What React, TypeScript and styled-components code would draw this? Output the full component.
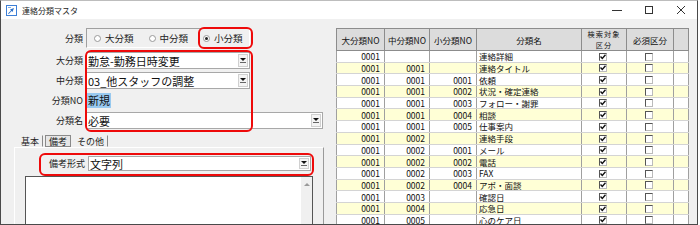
import styled, { createGlobalStyle } from "styled-components";

const GlobalStyle = createGlobalStyle`
  html, body { margin: 0; padding: 0; background: #fff; }
  body { font-family: "Noto Sans CJK JP", "Noto Sans", sans-serif; color: #111; }
  * { box-sizing: border-box; }
`;

type Row = { dai: string; chu: string; sho: string; name: string };

const rows: Row[] = [
  { dai: "0001", chu: "", sho: "", name: "連絡詳細" },
  { dai: "0001", chu: "0001", sho: "", name: "連絡タイトル" },
  { dai: "0001", chu: "0001", sho: "0001", name: "依頼" },
  { dai: "0001", chu: "0001", sho: "0002", name: "状況・確定連絡" },
  { dai: "0001", chu: "0001", sho: "0003", name: "フォロー・謝罪" },
  { dai: "0001", chu: "0001", sho: "0004", name: "相談" },
  { dai: "0001", chu: "0001", sho: "0005", name: "仕事案内" },
  { dai: "0001", chu: "0002", sho: "", name: "連絡手段" },
  { dai: "0001", chu: "0002", sho: "0001", name: "メール" },
  { dai: "0001", chu: "0002", sho: "0002", name: "電話" },
  { dai: "0001", chu: "0002", sho: "0003", name: "FAX" },
  { dai: "0001", chu: "0002", sho: "0004", name: "アポ・面談" },
  { dai: "0001", chu: "0003", sho: "", name: "確認日" },
  { dai: "0001", chu: "0004", sho: "", name: "応急日" },
  { dai: "0001", chu: "0005", sho: "", name: "心のケア日" },
];

const colWidths = [48, 45, 47, 105, 45, 47, 15];

const Window = styled.div`
  width: 698px;
  height: 225px;
  border: 1px solid #4a4a4a;
  border-top-color: #bdbdbd;
  display: flex;
  flex-direction: column;
  overflow: hidden;
`;

const TitleBar = styled.div`
  height: 18px;
  background: #fff;
  display: flex;
  align-items: center;
  padding-left: 5px;
  flex-shrink: 0;
`;

const Title = styled.span`
  font-size: 8px;
  margin-left: 5px;
  color: #222;
`;

const Controls = styled.div`
  margin-left: auto;
  display: flex;
  height: 100%;
  align-items: center;
`;

const Ctrl = styled.div`
  width: 32px;
  height: 100%;
  display: flex;
  align-items: center;
  justify-content: center;
`;

const Body = styled.div`
  flex: 1;
  display: flex;
  background: #f0f0f0;
  min-height: 0;
`;

const LeftPane = styled.div`
  width: 323px;
  position: relative;
  display: flex;
  flex-direction: column;
  padding-top: 9px;
`;

const FormRow = styled.div<{ $h?: number; $mt?: number }>`
  display: flex;
  align-items: center;
  height: ${({ $h }) => $h ?? 17}px;
  margin-top: ${({ $mt }) => $mt ?? 0}px;
`;

const Label = styled.div<{ $w?: number }>`
  width: ${({ $w }) => $w ?? 85}px;
  text-align: right;
  padding-right: 3px;
  font-size: 9px;
  color: #222;
  white-space: nowrap;
`;

const RadioGroup = styled.div`
  width: 164px;
  height: 20px;
  border: 1px solid;
  border-color: #a0a0a0 #fff #fff #a0a0a0;
  display: flex;
  align-items: center;
  padding-left: 7px;
  gap: 15px;
`;

const RadioItem = styled.label`
  display: flex;
  align-items: center;
  gap: 4px;
  font-size: 9.5px;
  color: #222;
`;

const RadioDot = styled.span<{ $on?: boolean }>`
  width: 7px;
  height: 7px;
  border-radius: 50%;
  border: 1px solid #9a9a9a;
  background: #fff;
  display: inline-flex;
  align-items: center;
  justify-content: center;
  &::after {
    content: "";
    width: 3px;
    height: 3px;
    border-radius: 50%;
    background: ${({ $on }) => ($on ? "#222" : "transparent")};
  }
`;

const Select = styled.div<{ $w: number; $h?: number }>`
  width: ${({ $w }) => $w}px;
  height: ${({ $h }) => $h ?? 17}px;
  background: #fff;
  border: 1px solid #a8a8a8;
  display: flex;
  align-items: center;
  font-size: 11px;
  padding-left: 1px;
  color: #111;
  white-space: nowrap;
`;

const SelectText = styled.span`
  flex: 1;
  overflow: hidden;
`;

const DropBtn = styled.span`
  width: 10px;
  height: calc(100% - 2px);
  margin-right: 1px;
  background: #f4f4f4;
  border: 1px solid #d0d0d0;
  display: flex;
  flex-direction: column;
  align-items: center;
  justify-content: center;
  gap: 1px;
  &::before {
    content: "";
    border-left: 3px solid transparent;
    border-right: 3px solid transparent;
    border-top: 3px solid #111;
  }
  &::after {
    content: "";
    width: 6px;
    height: 1px;
    background: #666;
  }
`;

const Selected = styled.span`
  background: #99c9ef;
  font-size: 11px;
  padding: 0 1px;
  line-height: 15px;
  margin-left: 1px;
`;

const Tabs = styled.div`
  display: flex;
  align-items: center;
  height: 12px;
  margin-top: 6px;
  padding-left: 16px;
  font-size: 9px;
  color: #222;
`;

const Tab = styled.span<{ $active?: boolean }>`
  padding: 0 3px;
  height: 12px;
  line-height: 11px;
  border: 1px solid ${({ $active }) => ($active ? "#8a8a8a" : "transparent")};
  border-right-color: #8a8a8a;
  background: ${({ $active }) => ($active ? "#e6e6e6" : "transparent")};
  margin-right: 2px;
`;

const Panel = styled.div`
  margin-left: 13px;
  width: 310px;
  flex: 1;
  border-left: 1px solid #fff;
  border-top: 1px solid #fff;
  border-right: 1px solid #9a9a9a;
  display: flex;
  flex-direction: column;
  padding-top: 8px;
`;

const TextArea = styled.div`
  margin: 5px 0 0 10px;
  width: 288px;
  flex: 1;
  background: #fff;
  border: 1px solid #555;
  border-bottom: none;
  display: flex;
  justify-content: flex-end;
`;

const ScrollBar = styled.div`
  width: 11px;
  background: #f0f0f0;
  display: flex;
  justify-content: center;
  padding-top: 6px;
  &::before {
    content: "";
    border-left: 3px solid transparent;
    border-right: 3px solid transparent;
    border-bottom: 3px solid #9a9a9a;
    height: 0;
  }
`;

const Highlight = styled.div<{ $x: number; $y: number; $w: number; $h: number }>`
  position: absolute;
  left: ${({ $x }) => $x}px;
  top: ${({ $y }) => $y}px;
  width: ${({ $w }) => $w}px;
  height: ${({ $h }) => $h}px;
  border: 2.5px solid #ee0a0a;
  border-radius: 6px;
  pointer-events: none;
`;

const Splitter = styled.div`
  width: 12px;
`;

const RightPane = styled.div`
  width: 352px;
  padding-top: 9px;
`;

const Grid = styled.table`
  border-collapse: collapse;
  table-layout: fixed;
  width: 352px;
  font-size: 8.5px;
  color: #111;
`;

const Th = styled.th`
  background: #dcdcdc;
  border: 1px solid #8c8c8c;
  font-weight: normal;
  height: 21px;
  padding: 0;
  line-height: 10px;
  font-size: 8.5px;
  white-space: nowrap;
`;

const TwoLine = styled.span`
  display: block;
  font-size: 7.2px;
  line-height: 10.5px;
  letter-spacing: 1px;
`;

const Tr = styled.tr<{ $alt: boolean }>`
  background: ${({ $alt }) => ($alt ? "#ffffd6" : "#fff")};
`;

const Td = styled.td<{ $align?: string }>`
  height: 11.4px;
  padding: 0 4px 0 2px;
  line-height: 10px;
  border-left: 1px solid #a0a0a0;
  border-right: 1px solid #a0a0a0;
  border-bottom: 1px solid #d4d4d4;
  text-align: ${({ $align }) => $align ?? "left"};
  white-space: nowrap;
  overflow: hidden;
`;

const Check = styled.span`
  display: inline-block;
  width: 8px;
  height: 8px;
  border: 1px solid;
  border-color: #555 #bbb #bbb #555;
  background: #fff;
  vertical-align: middle;
  position: relative;
  top: -1px;
`;

const CheckBox = ({ on }: { on: boolean }) => (
  <Check>
    {on && (
      <svg width="6" height="6" viewBox="0 0 6 6" style={{ display: "block" }}>
        <polyline points="0.5,2.5 2.3,4.5 5.5,0.8" fill="none" stroke="#111" strokeWidth="1.4" />
      </svg>
    )}
  </Check>
);

const AppIcon = () => (
  <svg width="11" height="11" viewBox="0 0 11 11">
    <rect x="0.5" y="0.5" width="10" height="10" fill="#fff" stroke="#3d7fd6" />
    <path d="M2 8.5 L5 5.5 L4 4.5 L8 3 L6.5 7 L5.6 6.1 L2.8 9 Z" fill="#2a6fc9" />
    <rect x="2" y="2" width="3" height="1" fill="#7fb0e8" />
  </svg>
);

export default function App() {
  return (
    <>
      <GlobalStyle />
      <Window>
        <TitleBar>
          <AppIcon />
          <Title>連絡分類マスタ</Title>
          <Controls>
            <Ctrl>
              <svg width="10" height="10" viewBox="0 0 10 10">
                <line x1="0" y1="5.5" x2="10" y2="5.5" stroke="#333" strokeWidth="1" />
              </svg>
            </Ctrl>
            <Ctrl>
              <svg width="10" height="10" viewBox="0 0 10 10">
                <rect x="1.5" y="1.5" width="7" height="7" fill="none" stroke="#333" strokeWidth="1" />
              </svg>
            </Ctrl>
            <Ctrl>
              <svg width="10" height="10" viewBox="0 0 10 10">
                <path d="M1 1 L9 9 M9 1 L1 9" stroke="#333" strokeWidth="1" />
              </svg>
            </Ctrl>
          </Controls>
        </TitleBar>
        <Body>
          <LeftPane>
            <FormRow $h={20}>
              <Label>分類</Label>
              <RadioGroup>
                <RadioItem>
                  <RadioDot />
                  大分類
                </RadioItem>
                <RadioItem>
                  <RadioDot />
                  中分類
                </RadioItem>
                <RadioItem>
                  <RadioDot $on />
                  小分類
                </RadioItem>
              </RadioGroup>
            </FormRow>
            <FormRow $mt={4}>
              <Label>大分類</Label>
              <Select $w={164}>
                <SelectText>勤怠-勤務日時変更</SelectText>
                <DropBtn />
              </Select>
            </FormRow>
            <FormRow $mt={3}>
              <Label>中分類</Label>
              <Select $w={164}>
                <SelectText>03_他スタッフの調整</SelectText>
                <DropBtn />
              </Select>
            </FormRow>
            <FormRow $mt={3}>
              <Label>分類NO</Label>
              <Selected>新規</Selected>
            </FormRow>
            <FormRow $mt={3}>
              <Label>分類名</Label>
              <Select $w={237}>
                <SelectText>必要</SelectText>
                <DropBtn />
              </Select>
            </FormRow>
            <Tabs>
              <Tab>基本</Tab>
              <Tab $active>備考</Tab>
              <Tab>その他</Tab>
            </Tabs>
            <Panel>
              <FormRow $h={15}>
                <Label $w={73}>備考形式</Label>
                <Select $w={223} $h={15}>
                  <SelectText>文字列</SelectText>
                  <DropBtn />
                </Select>
              </FormRow>
              <TextArea>
                <ScrollBar />
              </TextArea>
            </Panel>
            <Highlight $x={197} $y={8} $w={55} $h={22} />
            <Highlight $x={84} $y={31} $w={168} $h={82} />
            <Highlight $x={38} $y={134} $w={275} $h={23} />
          </LeftPane>
          <Splitter />
          <RightPane>
            <Grid>
              <colgroup>
                {colWidths.map((w, i) => (
                  <col key={i} style={{ width: w }} />
                ))}
              </colgroup>
              <thead>
                <tr>
                  <Th>大分類NO</Th>
                  <Th>中分類NO</Th>
                  <Th>小分類NO</Th>
                  <Th>分類名</Th>
                  <Th>
                    <TwoLine>
                      検索対象
                      <br />
                      区分
                    </TwoLine>
                  </Th>
                  <Th>必須区分</Th>
                  <Th />
                </tr>
              </thead>
              <tbody>
                {rows.map((r, i) => (
                  <Tr key={i} $alt={i % 2 === 1}>
                    <Td $align="right">{r.dai}</Td>
                    <Td $align="right">{r.chu}</Td>
                    <Td $align="right">{r.sho}</Td>
                    <Td>{r.name}</Td>
                    <Td $align="center">
                      <CheckBox on />
                    </Td>
                    <Td $align="center">
                      <CheckBox on={false} />
                    </Td>
                    <Td />
                  </Tr>
                ))}
              </tbody>
            </Grid>
          </RightPane>
        </Body>
      </Window>
    </>
  );
}
